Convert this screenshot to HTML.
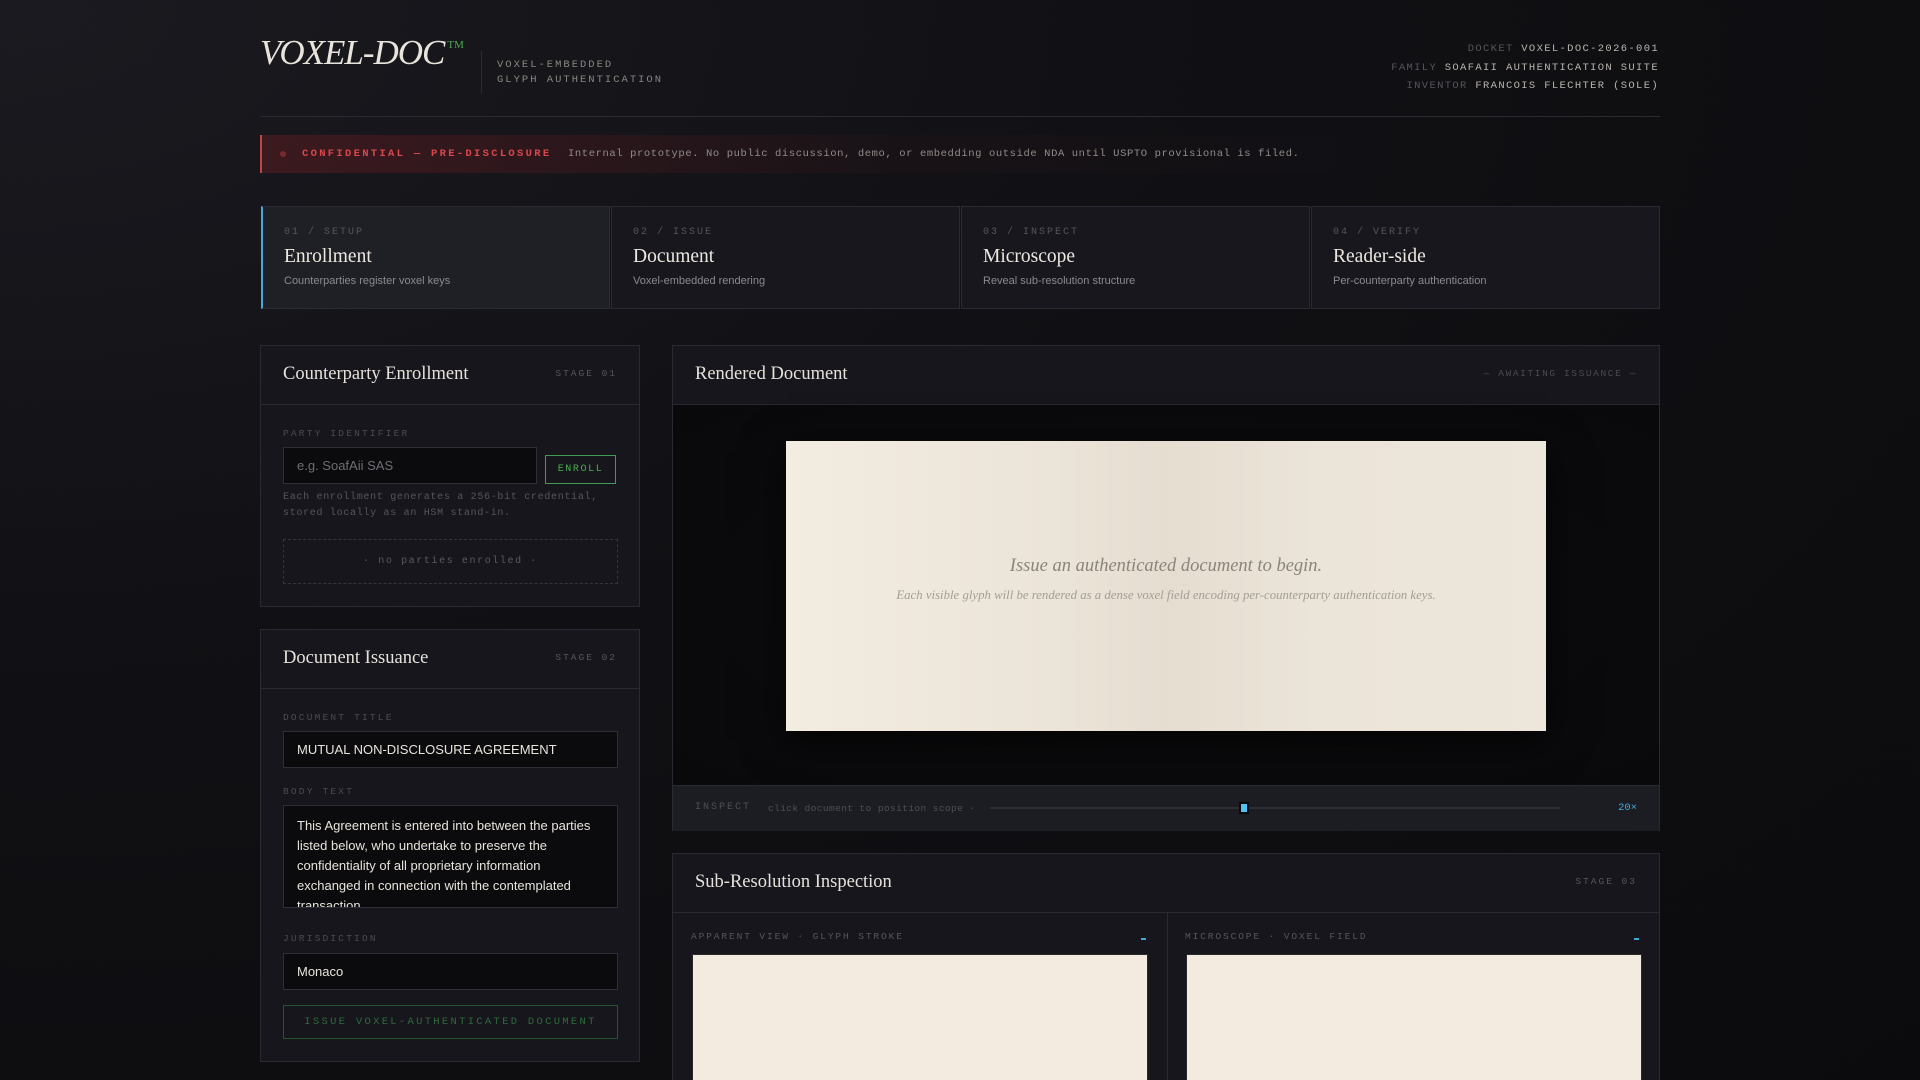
<!DOCTYPE html>
<html><head><meta charset="utf-8"><style>
*{box-sizing:border-box;margin:0;padding:0}
html,body{width:1920px;height:1080px;overflow:hidden}
body{background:radial-gradient(ellipse at 0% 0%,#1a1a20 0%,#111115 40%,#0b0b0d 100%);font-family:"Liberation Sans",sans-serif;color:#ddd;position:relative}
.a{position:absolute}
.mono{font-family:"Liberation Mono",monospace}
.serif{font-family:"Liberation Serif",serif}
.panel{position:absolute;background:#16161c;border:1px solid #2a2a33}
.ph{position:absolute;left:0;right:0;top:0;height:59px;border-bottom:1px solid #2a2a33}
.pt{position:absolute;left:22px;top:18px;font-family:"Liberation Serif",serif;font-size:18.5px;color:#e6e2da}
.ps{position:absolute;right:22px;top:22px;font-family:"Liberation Mono",monospace;font-size:9.5px;letter-spacing:2px;color:#55555d}
.lbl{position:absolute;font-family:"Liberation Mono",monospace;font-size:9.5px;letter-spacing:2.2px;color:#4a4a52}
.inp{position:absolute;background:#0b0b0d;border:1px solid #2e2e36;font-size:13px;color:#e8e4dc;padding-left:13px;display:flex;align-items:center}
.step{position:absolute;top:206px;height:103px;width:349px;background:#17171d;border:1px solid #2a2a33}
.step .n{position:absolute;left:21px;top:20px;font-family:"Liberation Mono",monospace;font-size:10px;letter-spacing:2px;color:#55555d}
.step .t{position:absolute;left:21px;top:39px;font-family:"Liberation Serif",serif;font-size:19.5px;color:#ece8e0}
.step .d{position:absolute;left:21px;top:68px;font-size:11px;color:#8a8a90}
</style></head><body>

<!-- header -->
<div class="a serif" style="left:260px;top:35px;font-size:35px;font-style:italic;color:#e8e4dc;letter-spacing:-1px;line-height:1">VOXEL-DOC<span style="font-size:11px;color:#4caf50;font-style:normal;vertical-align:top;position:relative;top:5px;left:3px;letter-spacing:0">TM</span></div>
<div class="a" style="left:481px;top:51px;width:1px;height:43px;background:#2c2c34"></div>
<div class="a mono" style="left:497px;top:58px;font-size:10.5px;letter-spacing:2px;line-height:15px;color:#8a8780">VOXEL-EMBEDDED<br>GLYPH AUTHENTICATION</div>
<div class="a mono" style="right:261px;top:40px;text-align:right;font-size:10.5px;letter-spacing:1.35px;line-height:18.5px;color:#b9b5ae">
<span style="color:#55555a">DOCKET</span> VOXEL-DOC-2026-001<br>
<span style="color:#55555a">FAMILY</span> SOAFAII AUTHENTICATION SUITE<br>
<span style="color:#55555a">INVENTOR</span> FRANCOIS FLECHTER (SOLE)</div>
<div class="a" style="left:260px;top:116px;width:1400px;height:1px;background:#2a2a32"></div>

<!-- banner -->
<div class="a" style="left:260px;top:135px;width:1400px;height:38px;background:linear-gradient(90deg,rgba(120,30,35,.38),rgba(60,20,25,.15) 45%,rgba(20,20,25,0) 80%);border-left:2px solid #c0454a"></div>
<div class="a" style="left:280px;top:151px;width:6px;height:6px;border-radius:50%;background:#7a2a2e"></div>
<div class="a mono" style="left:302px;top:148px;font-size:10.5px;font-weight:bold;letter-spacing:2.3px;color:#d9474c">CONFIDENTIAL — PRE-DISCLOSURE</div>
<div class="a mono" style="left:568px;top:148px;font-size:10.5px;letter-spacing:0.6px;color:#8f8c88">Internal prototype. No public discussion, demo, or embedding outside NDA until USPTO provisional is filed.</div>

<!-- steps -->
<div class="step" style="left:261px;background:#1f2026;border-left:2px solid #4aa8d8"><div class="n">01 / SETUP</div><div class="t">Enrollment</div><div class="d">Counterparties register voxel keys</div></div>
<div class="step" style="left:611px"><div class="n">02 / ISSUE</div><div class="t">Document</div><div class="d">Voxel-embedded rendering</div></div>
<div class="step" style="left:961px"><div class="n">03 / INSPECT</div><div class="t">Microscope</div><div class="d">Reveal sub-resolution structure</div></div>
<div class="step" style="left:1311px;width:349px"><div class="n">04 / VERIFY</div><div class="t">Reader-side</div><div class="d">Per-counterparty authentication</div></div>

<!-- panel 1 -->
<div class="panel" style="left:260px;top:345px;width:380px;height:262px">
<div class="ph"><div class="pt">Counterparty Enrollment</div><div class="ps">STAGE 01</div></div>
<div class="lbl" style="left:22px;top:82px">PARTY IDENTIFIER</div>
<div class="inp" style="left:22px;top:101px;width:254px;height:37px;color:#6e6e74">e.g. SoafAii SAS</div>
<div class="a mono" style="left:284px;top:109px;width:71px;height:29px;border:1px solid #3f9b52;color:#4caf50;font-size:10px;letter-spacing:1.6px;display:flex;align-items:center;justify-content:center">ENROLL</div>
<div class="a mono" style="left:22px;top:144px;font-size:10px;letter-spacing:0.7px;line-height:16px;color:#55555c">Each enrollment generates a 256-bit credential,<br>stored locally as an HSM stand-in.</div>
<div class="a mono" style="left:22px;top:193px;width:335px;height:45px;border:1px dashed #34343c;font-size:10px;letter-spacing:1.6px;color:#5a5a60;display:flex;align-items:center;justify-content:center">· no parties enrolled ·</div>
</div>

<!-- panel 2 -->
<div class="panel" style="left:260px;top:629px;width:380px;height:433px">
<div class="ph"><div class="pt">Document Issuance</div><div class="ps">STAGE 02</div></div>
<div class="lbl" style="left:22px;top:82px">DOCUMENT TITLE</div>
<div class="inp" style="left:22px;top:101px;width:335px;height:37px">MUTUAL NON-DISCLOSURE AGREEMENT</div>
<div class="lbl" style="left:22px;top:156px">BODY TEXT</div>
<div class="a" style="left:22px;top:175px;width:335px;height:103px;background:#0b0b0d;border:1px solid #2e2e36;overflow:hidden;font-size:13px;line-height:20px;color:#e8e4dc;padding:10px 13px 0">This Agreement is entered into between the parties listed below, who undertake to preserve the confidentiality of all proprietary information exchanged in connection with the contemplated transaction.</div>
<div class="lbl" style="left:22px;top:303px">JURISDICTION</div>
<div class="inp" style="left:22px;top:323px;width:335px;height:37px">Monaco</div>
<div class="a mono" style="left:22px;top:375px;width:335px;height:34px;border:1px solid #24552f;font-size:10.5px;letter-spacing:2.3px;color:#2f6b3c;display:flex;align-items:center;justify-content:center">ISSUE VOXEL-AUTHENTICATED DOCUMENT</div>
</div>

<!-- rendered doc -->
<div class="panel" style="left:672px;top:345px;width:988px;height:486px">
<div class="ph"><div class="pt">Rendered Document</div><div class="ps" style="color:#4a4a50;letter-spacing:1.6px">— AWAITING ISSUANCE —</div></div>
<div class="a" style="left:0;right:0;top:59px;height:380px;background:radial-gradient(ellipse at 50% 50%,#0d0d0f,#09090b)"></div>
<div class="a" style="left:113px;top:95px;width:760px;height:290px;background:linear-gradient(90deg,#f3ece0 0%,#ebe4d8 35%,#e5ddd0 50%,#ebe4d8 70%,#ede6da 100%);box-shadow:0 10px 40px rgba(0,0,0,.7)">
<div class="serif" style="position:absolute;left:0;right:0;top:115px;text-align:center;font-style:italic;font-size:18.5px;color:#8a847c">Issue an authenticated document to begin.</div>
<div class="serif" style="position:absolute;left:0;right:0;top:147px;text-align:center;font-style:italic;font-size:12.8px;color:#a39d94">Each visible glyph will be rendered as a dense voxel field encoding per-counterparty authentication keys.</div>
</div>
<div class="a" style="left:0;right:0;top:439px;height:46px;background:#1c1d23;border-top:1px solid #2a2a33"></div>
<div class="a mono" style="left:22px;top:456px;font-size:10px;letter-spacing:2px;color:#4e4e55">INSPECT</div>
<div class="a mono" style="left:95px;top:457px;font-size:9.5px;letter-spacing:0.4px;color:#4e4e55">click document to position scope ·</div>
<div class="a" style="left:317px;top:461px;width:570px;height:2px;background:#2d2e35"></div>
<div class="a" style="left:566px;top:456px;width:10px;height:12px;background:#4fc3f7;border:2px solid #0a0a0c"></div>
<div class="a mono" style="right:22px;top:456px;font-size:10.5px;color:#3fa9db">20×</div>
</div>

<!-- sub-res -->
<div class="panel" style="left:672px;top:853px;width:988px;height:260px">
<div class="ph"><div class="pt">Sub-Resolution Inspection</div><div class="ps">STAGE 03</div></div>
<div class="a" style="left:494px;top:59px;width:1px;height:220px;background:#2a2a33"></div>
<div class="lbl" style="left:18px;top:77px;font-size:9.5px;letter-spacing:1.9px;color:#55555c">APPARENT VIEW · GLYPH STROKE</div>
<div class="a" style="left:468px;top:84px;width:5px;height:2px;background:#3fa9db"></div>
<div class="lbl" style="left:512px;top:77px;font-size:9.5px;letter-spacing:1.9px;color:#55555c">MICROSCOPE · VOXEL FIELD</div>
<div class="a" style="left:961px;top:84px;width:5px;height:2px;background:#3fa9db"></div>
<div class="a" style="left:19px;top:100px;width:456px;height:140px;background:#f3ebdf;border:1px solid #2a2a2a"></div>
<div class="a" style="left:513px;top:100px;width:456px;height:140px;background:#f3ebdf;border:1px solid #2a2a2a"></div>
</div>
</body></html>
